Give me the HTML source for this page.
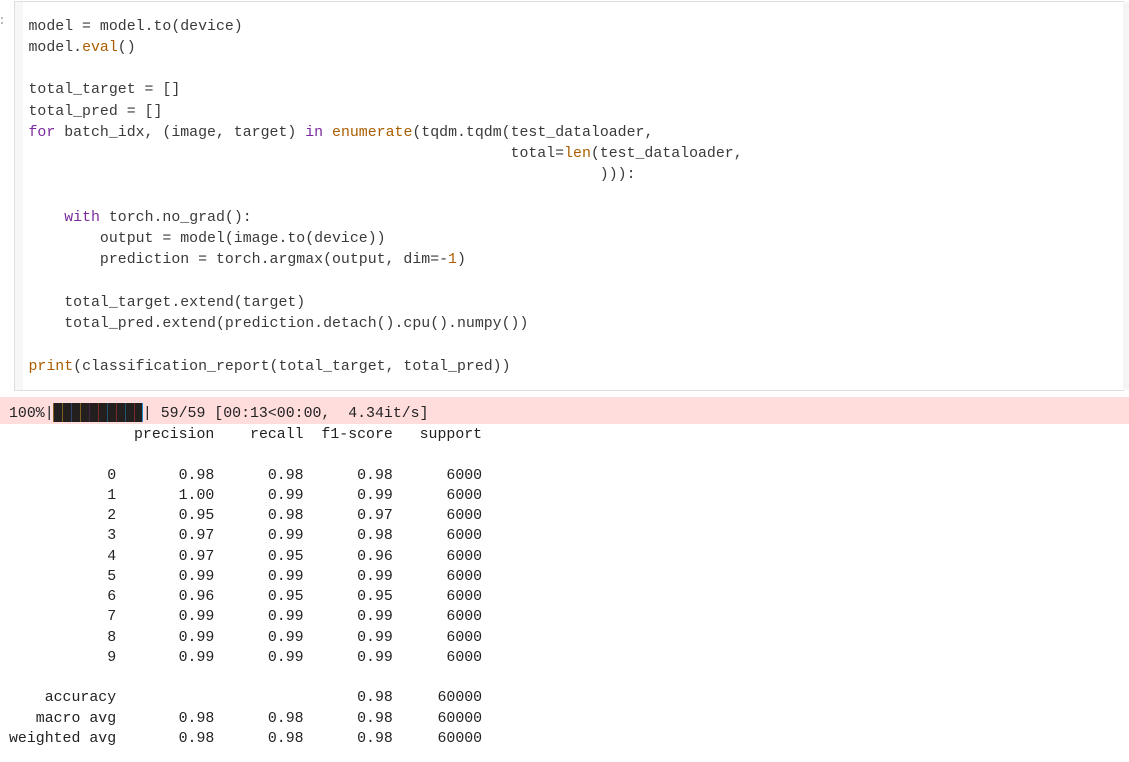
<!DOCTYPE html>
<html>
<head>
<meta charset="utf-8">
<style>
html,body{margin:0;padding:0;background:#fff;width:1129px;height:762px;overflow:hidden}
pre{margin:0;font-family:"Liberation Mono","DejaVu Sans Mono",monospace;font-size:14.88px;position:absolute;white-space:pre}
.abs{position:absolute}
#cell{left:14px;top:1px;width:1109px;height:388px;border:1px solid #dfdfdf;border-right:none;background:#fff}
#gut{left:15px;top:2px;width:8px;height:388px;background:#f7f7f7}
#sb{left:1123px;top:2px;width:6px;height:388px;background:#f5f5f5}
#code{left:28.5px;top:16.5px;line-height:21.27px;color:#3a3a3a}
.k{color:#7a2a9e}
.b{color:#aa5d00}
#err{left:0;top:397px;width:1129px;height:27px;background:#ffdddd}
#prog{left:9px;top:403px;line-height:20px;color:#222}
.bar{display:inline-block;width:10ch;height:14px}
#barv{left:53px;top:403px;width:90px;height:19px;background:#231f1f}
#barv i{position:absolute;top:0;width:1px;height:19px}
#out{left:9px;top:425px;line-height:20.27px;color:#222}
#dots{left:1px;top:17px;width:3px;height:8px}
#dots i{display:block;width:2px;height:2px;background:#bbb;margin-bottom:3px}
</style>
</head>
<body>
<div class="abs" id="cell"></div>
<div class="abs" id="gut"></div>
<div class="abs" id="sb"></div>
<div class="abs" id="dots"><i></i><i></i></div>
<pre id="code">model = model.to(device)
model.<span class="b">eval</span>()

total_target = []
total_pred = []
<span class="k">for</span> batch_idx, (image, target) <span class="k">in</span> <span class="b">enumerate</span>(tqdm.tqdm(test_dataloader,
                                                      total=<span class="b">len</span>(test_dataloader,
                                                                ))):

    <span class="k">with</span> torch.no_grad():
        output = model(image.to(device))
        prediction = torch.argmax(output, dim=-<span class="b">1</span>)

    total_target.extend(target)
    total_pred.extend(prediction.detach().cpu().numpy())

<span class="b">print</span>(classification_report(total_target, total_pred))</pre>
<div class="abs" id="err"></div>
<div class="abs" id="barv">
<i style="left:0;background:#8a6020"></i>
<i style="left:9px;background:#7d5f20"></i>
<i style="left:18px;background:#33456e"></i>
<i style="left:27px;background:#7d5f20"></i>
<i style="left:36px;background:#472548"></i>
<i style="left:45px;background:#7a2a26"></i>
<i style="left:54px;background:#1f5570"></i>
<i style="left:63px;background:#7a2a26"></i>
<i style="left:72px;background:#1f5570"></i>
<i style="left:81px;background:#7a2a26"></i>
<i style="left:89px;background:#1f8fd0"></i>
</div>
<pre id="prog">100%|<span class="bar"></span>| 59/59 [00:13&lt;00:00,  4.34it/s]</pre>
<pre id="out">              precision    recall  f1-score   support

           0       0.98      0.98      0.98      6000
           1       1.00      0.99      0.99      6000
           2       0.95      0.98      0.97      6000
           3       0.97      0.99      0.98      6000
           4       0.97      0.95      0.96      6000
           5       0.99      0.99      0.99      6000
           6       0.96      0.95      0.95      6000
           7       0.99      0.99      0.99      6000
           8       0.99      0.99      0.99      6000
           9       0.99      0.99      0.99      6000

    accuracy                           0.98     60000
   macro avg       0.98      0.98      0.98     60000
weighted avg       0.98      0.98      0.98     60000</pre>
</body>
</html>
